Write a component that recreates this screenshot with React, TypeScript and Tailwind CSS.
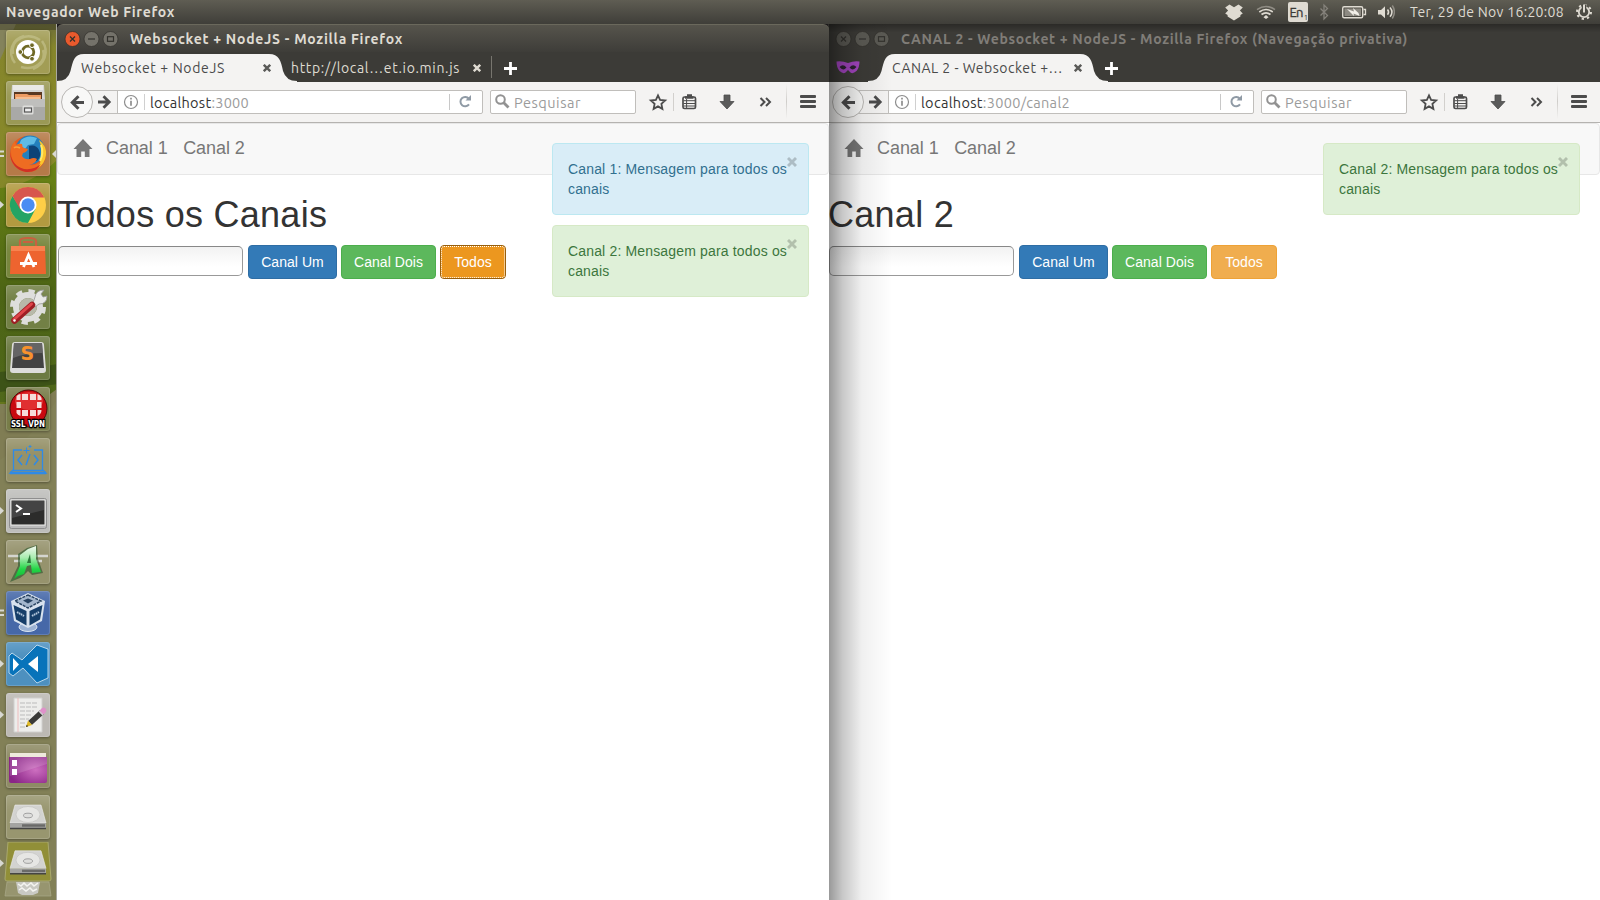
import React, { useLayoutEffect, useRef, useState } from "react";

/** Single-line label whose letter spacing is adjusted so it fills `width` px. */
function Label({ text, width, className = "" }: { text: React.ReactNode; width: number; className?: string }) {
  const ref = useRef<HTMLSpanElement>(null);
  const [spacing, setSpacing] = useState(0);
  useLayoutEffect(() => {
    const el = ref.current;
    if (!el) return;
    const natural = el.getBoundingClientRect().width;
    const n = el.textContent?.length ?? 1;
    setSpacing((width - natural) / n);
  }, [width]);
  return (
    <span
      ref={ref}
      className={"inline-block shrink-0 whitespace-nowrap font-['Ubuntu','Noto_Sans',sans-serif] " + className}
      style={{ letterSpacing: spacing + "px" }}
    >
      {text}
    </span>
  );
}

/* ---------- top panel ---------- */

function TopPanel() {
  return (
    <header className="flex h-6 shrink-0 items-center bg-linear-to-b from-[#5f5d53] to-[#3f3e39] pl-[6px] text-[#dfdbd2]">
      <Label text="Navegador Web Firefox" width={169} className="text-[14px] font-bold leading-6" />
      <svg className="ml-auto shrink-0" width="175" height="24" viewBox="1220 0 175 24" fill="none">
        <g fill="#dfdbd2">
          <path d="M1229.500 4.500l4.500 2.800 4.500-2.800 4.300 3-2.900 3 2.900 3-2.400 1.600v1.500l-6.400 4-6.400-4v-1.500l-2.400-1.600 2.900-3-2.900-3z" />
          <path d="M1263.500 18.300l2.500-2.200 2.500 2.200-2.500 1.700z" transform="translate(0 -1)" />
          <rect x="1288" y="2" width="20" height="20" rx="2" />
          <path d="M1378 10h3l4-3.800v12l-4-3.700h-3z" />
        </g>
        <path d="M1261.500 14.500q4.500-3.400 9 0M1259.300 12q6.700-5 13.400 0" stroke="#dfdbd2" strokeWidth="1.700" />
        <path d="M1257 9.700q9-6.500 18 0" stroke="#8f8c84" strokeWidth="1.600" />
        <text x="1289.500" y="17" fontSize="13" fill="#3b3a36" stroke="#3b3a36" strokeWidth=".3" fontFamily="Ubuntu, Noto Sans, sans-serif" textLength="14">En</text>
        <text x="1304" y="20" fontSize="7" fill="#3b3a36" fontFamily="Noto Sans, sans-serif">1</text>
        <path d="M1320.500 8.500l7 7-3.500 3.500V5l3.500 3.500-7 7" stroke="#85827b" strokeWidth="1.300" />
        <rect x="1342.700" y="6.700" width="20" height="11" rx="1.500" stroke="#dfdbd2" strokeWidth="1.400" />
        <path d="M1363.500 9.500h2v5h-2" stroke="#dfdbd2" strokeWidth="1.300" />
        <rect x="1344.500" y="8.500" width="16.500" height="7.500" fill="#8d8a82" />
        <path d="M1347 9l7 2.500-1-3.500 5.500 5 1 3-6-2.500.5 2.500z" fill="#f2efe8" />
        <path d="M1387.500 9.500q2.200 2.700 0 5.300M1390 7.500q4 4.700 0 9.300" stroke="#dfdbd2" strokeWidth="1.500" />
        <path d="M1392.300 5.500q4.200 6.500 0 13" stroke="#8f8c84" strokeWidth="1.500" />
      </svg>
      <Label text="Ter, 29 de Nov 16:20:08" width={154} className="ml-[15px] text-[14px] leading-6" />
      <svg className="ml-3 mr-2 shrink-0" width="16" height="18" viewBox="0 0 16 18" fill="none" stroke="#dfdbd2">
        <circle cx="8" cy="9" r="5.200" strokeWidth="1.800" />
        <circle cx="8" cy="9" r="7" strokeWidth="2" strokeDasharray="2.300 3.200" />
        <path d="M8 1.500v8" stroke="#4b4a43" strokeWidth="4.500" />
        <path d="M8 1.500v8" strokeWidth="2" />
      </svg>
    </header>
  );
}

/* ---------- launcher ---------- */

const Drive = () => (
  <g>
    <path d="M9 10h26l5 18H4z" fill="#d3d3d1" stroke="#eee" strokeWidth=".6" />
    <ellipse cx="22" cy="19.500" rx="12" ry="8" fill="#e6e6e4" stroke="#c4c4c2" strokeWidth=".7" />
    <ellipse cx="22" cy="20.500" rx="4.500" ry="2.300" fill="#dededc" stroke="#999" strokeWidth=".9" />
    <path d="M4 28h36v5H4z" fill="#a4a4a2" />
    <path d="M4 33.500h36" stroke="#454543" strokeWidth="1.500" />
    <path d="M16 30.500h23" stroke="#6a6a68" strokeWidth="2.500" />
  </g>
);

type Tile = { name: string; bg: string; icon: React.ReactNode; left?: 1 | 2; active?: boolean };

const tiles: Tile[] = [
  {
    name: "dash",
    bg: "bg-[#a29d55]",
    icon: (
      <g fill="none">
        <path d="M7 24C4 8 22 2 34 10M37 20c4 12-9 21-22 17M9 33C1 23 6 9 18 6M36 11c8 11 2 24-9 28" stroke="#d0cd9d" strokeWidth="2.500" opacity=".5" />
        <circle cx="22" cy="22" r="12" fill="#fff" />
        <circle cx="22" cy="22" r="5.800" stroke="#6f6925" strokeWidth="2.800" />
        <g fill="#6f6925" stroke="#fff" strokeWidth="1">
          <circle cx="14.300" cy="22" r="2.400" />
          <circle cx="26" cy="15.200" r="2.400" />
          <circle cx="26" cy="28.800" r="2.400" />
        </g>
      </g>
    ),
  },
  {
    name: "files",
    bg: "bg-[#9a9956]",
    icon: (
      <g>
        <path d="M6 4h32l1 15H5z" fill="#d7d7d5" />
        <path d="M7 4h30v5H7z" fill="#e9e9e7" />
        <path d="M8 11h28v8H8z" fill="#5b3922" />
        <path d="M9 13h12l2 1h12v6H9z" fill="#ee9b62" />
        <path d="M10 16h24v3H10z" fill="#f6bd90" />
        <path d="M5 18h34v21H5z" fill="#a9a9a7" />
        <path d="M5 18h34v8H5z" fill="#bfbfbd" />
        <rect x="16.500" y="24.500" width="11" height="9" rx="1.500" fill="#dededc" />
        <rect x="18.500" y="27" width="7" height="4" fill="#eee" stroke="#555" strokeWidth="1.200" />
      </g>
    ),
  },
  {
    name: "firefox",
    bg: "bg-[#b57a48]",
    left: 2,
    active: true,
    icon: (
      <g>
        <circle cx="22" cy="22" r="18" fill="#e55b20" />
        <circle cx="24" cy="18" r="14.500" fill="#2380bd" />
        <path d="M15 8q7-6 16-2l-3 6-6 1-3 4-6-4z" fill="#5fbbe6" />
        <path d="M23 14q7-2 10 4t-2 11l-8-2z" fill="#0d4377" />
        <path d="M33 8q8 6 7 15-1 9-9 14 4-6 4-13 1-9-2-16z" fill="#fbc62d" />
        <path d="M35 13q3 8-1 16" stroke="#ffe86b" strokeWidth="2" fill="none" />
        <path d="M5 16q1-4 4-7l1 4q3-2 6-1 0 3 2 4l4 1q-1 3-5 4l-1 3q3 4 8 3 4-2 7 0-2 5-8 6 8 1 12-4-4 10-14 9Q4 36 5 16z" fill="#ee6c22" />
        <path d="M4 20q2 14 14 17 11 1 17-5-5 9-15 8Q5 37 4 20z" fill="#cf3026" />
        <path d="M8 16q2-2 6 0" stroke="#f9a13a" strokeWidth="1.600" fill="none" />
      </g>
    ),
  },
  {
    name: "chrome",
    bg: "bg-[#b29a40]",
    left: 1,
    icon: (
      <g>
        <circle cx="22" cy="22" r="18" fill="#fdce47" />
        <path d="M6.400 13A18 18 0 0 0 22 40l7.500-14L22 22l-7 4z" fill="#25a464" />
        <path d="M6.400 13A18 18 0 0 1 37.600 13L38 14.500H22L14 26z" fill="#d7574d" />
        <circle cx="22" cy="22" r="8.500" fill="#fff" />
        <circle cx="22" cy="22" r="6.700" fill="#4a8df3" />
      </g>
    ),
  },
  {
    name: "software",
    bg: "bg-[#77863d]",
    icon: (
      <g>
        <path d="M14 13V7q0-3 8-3t8 3v6M17 8h10" stroke="#c9603f" strokeWidth="2.200" fill="none" />
        <path d="M5 12h34l1 28H4z" fill="#ee642f" />
        <path d="M5 12h34v5H5z" fill="#f7834f" />
        <path d="M17.500 33l5-12 5.500 12M14 29.500h17" stroke="#fff" strokeWidth="2.800" fill="none" />
      </g>
    ),
  },
  {
    name: "settings",
    bg: "bg-[#728045]",
    icon: (
      <g>
        <circle cx="22" cy="22" r="12" fill="none" stroke="#dededc" strokeWidth="6" />
        <circle cx="22" cy="22" r="16" fill="none" stroke="#dededc" strokeWidth="4" strokeDasharray="6.280 6.280" />
        <circle cx="22" cy="22" r="9" fill="#b8b9aa" />
        <path d="M27 18l2-6q1-7 9-7l-3 4 2 3 4-1q0 8-8 8l-4 3z" fill="#e8e8e6" stroke="#999" strokeWidth=".8" />
        <path d="M26 20L8.500 35.500" stroke="#9e1e24" strokeWidth="6.500" strokeLinecap="round" />
        <path d="M25.500 19L8 34.500" stroke="#e0454a" strokeWidth="3" strokeLinecap="round" />
        <circle cx="8.500" cy="35.500" r="1.200" fill="#fff" />
      </g>
    ),
  },
  {
    name: "sublime",
    bg: "bg-[#6c7a42]",
    icon: (
      <g>
        <path d="M6 9q0-3 3-3h26q3 0 3 3l2 25q0 3-3 3H7q-3 0-3-3z" fill="#dcdcda" />
        <path d="M8 7h28l2 25H6z" fill="#424242" />
        <path d="M8 7h28l.7 10Q20 17 7 22z" fill="#656565" />
        <text x="14.500" y="24" fontFamily="DejaVu Sans, sans-serif" fontWeight="bold" fontSize="19" fill="#f7922d">S</text>
      </g>
    ),
  },
  {
    name: "vpn",
    bg: "bg-[#777c48]",
    icon: (
      <g>
        <circle cx="22.500" cy="21.500" r="18.500" fill="#c9090f" stroke="#4d0908" />
        <ellipse cx="23" cy="14" rx="14" ry="9" fill="#f04a48" opacity=".6" />
        <path d="M16 7h6v6h-6zM24 7h6v6h-6zM10.500 9q2-2 4-2v6h-4zM31.500 7q3 1 4 4v2h-4zM10.500 15h4.500v6h-4.500zM31 15h4.500v6H31zM10.500 23h4v6q-3-1-4-3zM16 23h6v6h-6zM24 23h6v6h-6zM31.500 23h4q0 4-4 6z" fill="#f6dcda" />
        <text x="5" y="39.500" fontFamily="DejaVu Sans, sans-serif" fontWeight="bold" fontSize="9" textLength="34" lengthAdjust="spacingAndGlyphs" fill="#fff" stroke="#000" strokeWidth="2.500" paintOrder="stroke">SSL VPN</text>
      </g>
    ),
  },
  {
    name: "editor",
    bg: "bg-[#959168]",
    icon: (
      <g fill="none" stroke="#2f8ae6" strokeWidth="1.300">
        <path d="M16 12H7.500v20.500h29V12H28" />
        <path d="M7 32l-3 3h36l-3-3" />
        <path d="M20.500 9.500v6M17.500 12.500h6M24 7v3M22.500 8.500h3" strokeWidth="1" />
        <path d="M16 17l-4 5 4 5M28 17l4 5-4 5M24 16l-4 11" strokeWidth="1.500" />
        <path d="M4 35h36" strokeWidth="2.500" />
      </g>
    ),
  },
  {
    name: "terminal",
    bg: "bg-[#bebebb]",
    left: 1,
    icon: (
      <g>
        <rect x="3.500" y="9.500" width="37" height="30" rx="2" fill="#bababa" stroke="#8e8e8e" />
        <rect x="5" y="11" width="34" height="25" fill="#2c2c2b" stroke="#f0f0ee" />
        <path d="M6 12h32v9L6 29z" fill="#444" />
        <path d="M10 16l5 3.500-5 3.500M17 25h7" stroke="#fff" strokeWidth="2" fill="none" />
      </g>
    ),
  },
  {
    name: "monitor",
    bg: "bg-[#96936d]",
    icon: (
      <g>
        <defs>
          <linearGradient id="mon" x1="0" y1="0" x2="0" y2="1">
            <stop offset="0" stopColor="#f2f8f0" />
            <stop offset=".35" stopColor="#a9ecb0" />
            <stop offset=".7" stopColor="#22d646" />
            <stop offset="1" stopColor="#16b537" />
          </linearGradient>
        </defs>
        <path d="M2 16h40M8 21h28" stroke="#d5d5cf" strokeWidth="2.500" />
        <path d="M4 42l8-16V14l9-6 10-3 1 14 5 14-11 2-4-4-4 4-4 3z" fill="#1c4e23" opacity=".55" />
        <path d="M8 39l6-13V15l8-6 8-3v13l5 13-9 1-1-8-4 1-3 8-6 2z" fill="url(#mon)" />
        <path d="M21 23l3-9 1 9z" fill="#2c7a3a" />
      </g>
    ),
  },
  {
    name: "virtualbox",
    bg: "bg-[#4668a8]",
    left: 2,
    icon: (
      <g>
        <ellipse cx="22" cy="36" rx="9" ry="4.500" fill="#9cb3d4" stroke="#dbe5f2" />
        <path d="M22 2l17 8-3 20-14 7L8 30 5 10z" fill="#d8e2ee" />
        <path d="M22 4l13 6-13 7L9 10z" fill="#a4b7cd" stroke="#274260" strokeWidth="1.500" strokeDasharray="3 1" />
        <path d="M7.500 14L20.500 20v14.500L10 28.500zM36.500 14L23.500 20v14.500L34 28.500z" fill="#163e69" />
        <path d="M11 21l7 4M26 25l7-4" stroke="#b5c8dc" strokeWidth="2" strokeDasharray="1.600 .6" />
        <path d="M17 9.500l5-2 5 2-5 3z" fill="#274260" />
      </g>
    ),
  },
  {
    name: "vscode",
    bg: "bg-[#4d90bf]",
    left: 1,
    icon: (
      <g>
        <path d="M3 14l3-3 10 7L31 3l11 4v29l-11 5-14-15-10 8-4-3z" fill="#0873ba" stroke="#b9d8ec" strokeWidth="1" />
        <path d="M7 16v13l6-6.500zM32 14v16l-10-8z" fill="#fff" />
      </g>
    ),
  },
  {
    name: "gedit",
    bg: "bg-[#bcb9b4]",
    left: 1,
    icon: (
      <g>
        <path d="M8 5h28v34H8z" fill="#ededeb" stroke="#d0d0ce" />
        <path d="M12 5v34" stroke="#efaaaa" strokeWidth=".7" />
        <path d="M14 10h17M14 14h18M14 18h14M14 22h12M14 26h9M14 30h6M14 34h6" stroke="#bbb" strokeWidth="1" strokeDasharray="5 1" />
        <path d="M24 30L36 19" stroke="#393937" strokeWidth="5.500" />
        <path d="M36.500 18.500l1-1" stroke="#df91ca" strokeWidth="5.500" strokeLinecap="round" />
        <path d="M20 34l2-6.500 4 4.500z" fill="#dfb822" />
        <path d="M20 34l.7-2.200 1.500 1.500z" fill="#222" />
        <path d="M34.500 20.500l1-1" stroke="#ccc" strokeWidth="5.500" />
      </g>
    ),
  },
  {
    name: "workspace",
    bg: "bg-[#8e8b65]",
    icon: (
      <g>
        <defs>
          <radialGradient id="ws" cx=".7" cy=".5" r=".7">
            <stop offset="0" stopColor="#cd6fc0" />
            <stop offset="1" stopColor="#8a2587" />
          </radialGradient>
        </defs>
        <path d="M4 9h36v4H4z" fill="#eeeadd" />
        <path d="M3 13h38v24q0 2-2 2H5q-2 0-2-2z" fill="url(#ws)" />
        <path d="M4 13h37v7L4 32z" fill="#fff" opacity=".14" />
        <path d="M6 16h5v6H6zM6 25h5v6H6z" fill="#fff" />
      </g>
    ),
  },
  { name: "disk", bg: "bg-[#98966f]", icon: <Drive /> },
];

function Launcher() {
  return (
    <aside className="relative flex w-[57px] shrink-0 flex-col items-center overflow-hidden border-r border-[#aaa9a0] bg-[#807e55]">
      <svg className="absolute inset-0" width="57" height="876" viewBox="0 24 57 876" preserveAspectRatio="none">
        <defs>
          <linearGradient id="wall" x1="0" y1="0" x2="0" y2="1">
            <stop offset="0" stopColor="#6d6c3a" />
            <stop offset=".06" stopColor="#85852b" />
            <stop offset=".35" stopColor="#88892a" />
            <stop offset="1" stopColor="#65761c" />
          </linearGradient>
          <linearGradient id="leaf" x1="0" y1="0" x2="0" y2="1">
            <stop offset="0" stopColor="#6b8515" />
            <stop offset=".55" stopColor="#4c6414" />
            <stop offset="1" stopColor="#50681b" />
          </linearGradient>
        </defs>
        <path d="M0 24h57v380H0z" fill="url(#wall)" />
        <path d="M0 60l16-36H0z" fill="#84835c" />
        <path d="M0 188q30-2 57-28v242H0z" fill="url(#leaf)" />
        <path d="M0 372q30-3 57-8v20L0 392z" fill="#3d5317" />
        <path d="M0 414q30-4 57-25v511H0z" fill="#807d54" />
        <path d="M0 460q30-20 57-60v500H0z" fill="#828057" />
        <path d="M0 24h57v6H0z" fill="#2e2d1b" opacity=".4" />
      </svg>
      <div className="relative flex w-full flex-col gap-[7px] pl-[6px] pt-[6px]">
        {tiles.map((t) => (
          <div key={t.name} className="relative h-11 w-11">
            <div className={"flex h-11 w-11 items-center justify-center rounded-[3px] shadow-[0_1px_3px_rgba(0,0,0,.35),inset_0_0_0_1px_rgba(255,255,255,.14),inset_0_14px_14px_-8px_rgba(255,255,255,.18)] " + t.bg}>
              <svg className="overflow-visible" width="44" height="44" viewBox="0 0 44 44">{t.icon}</svg>
            </div>
            {t.left && (
              <svg className="absolute -left-[6px] top-[18px]" width="5" height="8" viewBox="0 0 5 8" fill="#d8d8d2">
                {t.left === 1 ? <path d="M0 0v7.500L4 3.700z" /> : <path d="M0 .5h4v2H0zM0 5h4v2H0z" />}
              </svg>
            )}
            {t.active && (
              <svg className="absolute left-[46px] top-[18px]" width="4" height="8" viewBox="0 0 4 8" fill="#d8d8d2">
                <path d="M4 0v8L0 4z" />
              </svg>
            )}
          </div>
        ))}
      </div>
      <svg className="relative mt-[3px] shrink-0" width="57" height="58" viewBox="0 842 57 58">
        <path d="M8 842h40l3 37q0 2-2 2H7q-2 0-2-2z" fill="#918f38" stroke="#a9a86e" />
        <g transform="translate(6 841) scale(1 .98)"><Drive /></g>
        <path d="M7 882h42l2 14H5z" fill="#97956f" stroke="#aaa98a" strokeWidth=".7" />
        <path d="M16 882h24l-2 11-5 2H22l-4-2z" fill="#c9c9c3" />
        <path d="M18 884l3 2 3-3 3 3 4-3 3 3 4-3M19 890l3-2 4 3 4-3 3 3 4-2" stroke="#f4f4f0" strokeWidth="1.500" fill="none" />
        <path d="M0 859.500v7.500l4-3.700z" fill="#d8d8d2" />
      </svg>
    </aside>
  );
}

/* ---------- browser window ---------- */

function WindowButtons({ active }: { active: boolean }) {
  const ink = active ? "#32312c" : "#33322e";
  const dim = active ? "#74726a" : "#5b5a54";
  return (
    <svg className="shrink-0" width="55" height="18" viewBox="0 0 55 18" fill="none">
      <circle cx="8.500" cy="9" r="7.500" fill={active ? "#ea5a2d" : dim} stroke="#302f2b" strokeWidth=".7" />
      <circle cx="27.500" cy="9" r="7.500" fill={dim} stroke="#302f2b" strokeWidth=".7" />
      <circle cx="46.500" cy="9" r="7.500" fill={dim} stroke="#302f2b" strokeWidth=".7" />
      <path d="M6 6.500l5 5M11 6.500l-5 5" stroke={ink} strokeWidth="1.200" />
      <path d="M24 9h7" stroke={ink} strokeWidth="1.200" />
      <rect x="43.500" y="6.700" width="6" height="4.600" stroke={ink} strokeWidth="1.200" />
    </svg>
  );
}

const TabClose = ({ className }: { className: string }) => (
  <svg className={"shrink-0 " + className} width="8" height="8" viewBox="0 0 8 8" stroke="currentColor" strokeWidth="2.400">
    <path d="M.8.8l6.400 6.400M7.200.8L.8 7.200" />
  </svg>
);

const NewTab = ({ className }: { className: string }) => (
  <svg className={"shrink-0 " + className} width="13" height="13" viewBox="0 0 13 13" stroke="#fff" strokeWidth="2.800">
    <path d="M6.500 0v13M0 6.500h13" />
  </svg>
);

function ActiveTab({ title, width }: { title: string; width: number }) {
  return (
    <div className="relative flex h-[30px] w-[240px] shrink-0 items-center pl-[24px] pr-[26px] pt-[2px] text-[#4a4a4a]">
      <svg className="absolute left-0 top-0" width="240" height="30" viewBox="0 0 240 30">
        <path d="M0 30V29Q11 29 13.500 19C16 9 17 2 27 2H212C222 2 224 9 226 19Q229 29 240 29V30z" fill="#f4f3f2" />
      </svg>
      <Label text={title} width={width} className="relative text-[14px] leading-[28px]" />
      <TabClose className="relative ml-auto text-[#5a5a58]" />
    </div>
  );
}

const MaskIcon = () => (
  <svg className="ml-[8px] mr-[5px] shrink-0" width="24" height="15" viewBox="0 0 24 15">
    <path d="M.5 1.500q5.500-1 11.500 1.500 6-2.500 11.500-1.500 0 6-3 9.500-4.500 4-7 .5L12 10l-1.500 1.500q-2.500 3.500-7-.5-3-3.500-3-9.500z" fill="#a546c2" />
    <path d="M3.500 7q3.500-3.500 7 .5-3.500 4-7-.5zM13.500 7.500q3.500-4 7-.5-3.500 4.500-7 .5z" fill="#2d2332" />
  </svg>
);

function NavToolbar({ path }: { path: string }) {
  return (
    <div className="relative flex h-[40.500px] shrink-0 items-center border-b border-[#b5b3b0] bg-[#f4f3f2]">
      <div className="ml-[30px] flex h-6 w-[396px] items-center border border-[#c0bebb] bg-white rounded-r-[2px]">
        <div className="flex h-full w-[30px] items-center border-r border-[#c0bebb] bg-[#f4f3f2] pl-[10px]">
          <svg width="14" height="14" viewBox="0 0 14 14" fill="none" stroke="#4c4c4c" strokeWidth="2.800">
            <path d="M0 7h11M5.500 1.300L11.200 7l-5.700 5.700" />
          </svg>
        </div>
        <svg className="ml-[5px]" width="16" height="16" viewBox="0 0 16 16" fill="none" stroke="#8d8d8d" strokeWidth="1.200">
          <circle cx="8" cy="8" r="6.500" />
          <path d="M8 3.800v1.800M8 6.700v5" strokeWidth="1.700" />
        </svg>
        <div className="ml-[5px] h-4 w-px bg-[#d0d0d0]" />
        <Label
          text={<>localhost<span className="text-[#9b9b9b]">{path}</span></>}
          width={path.length > 5 ? 149 : 99}
          className="ml-[5px] pt-[2px] text-[14.5px] leading-5 text-[#333]"
        />
        <div className="ml-auto h-4 w-px bg-[#c8c8c8]" />
        <svg className="ml-[9px] mr-[10px]" width="13" height="13" viewBox="0 0 13 13" fill="none" stroke="#8f9aa5" strokeWidth="2">
          <path d="M10 9.300A4.700 4.700 0 1 1 9.800 3.600" />
          <path d="M12 0v5.500H6.500z" fill="#8f9aa5" stroke="none" />
        </svg>
      </div>
      <div className="absolute left-1 top-1 flex h-8 w-8 items-center justify-center rounded-full border border-[#b9b7b4] bg-[#f8f8f7]">
        <svg width="15" height="15" viewBox="0 0 15 15" fill="none" stroke="#4c4c4c" strokeWidth="3">
          <path d="M14 7.500H3M8.500 1.300L2.300 7.500l6.200 6.200" />
        </svg>
      </div>
      <div className="ml-[7px] flex h-6 w-[146px] items-center rounded-[2px] border border-[#c0bebb] bg-white pl-1">
        <svg width="15" height="15" viewBox="0 0 15 15" fill="none" stroke="#929292">
          <circle cx="5.500" cy="5.500" r="4.300" strokeWidth="2" />
          <path d="M8.500 8.500l5 5" strokeWidth="2.800" />
        </svg>
        <Label text="Pesquisar" width={67} className="ml-[4px] pt-[2px] text-[14.500px] leading-5 text-[#9b9b9b]" />
      </div>
      <svg className="shrink-0" width="136" height="40" viewBox="636 82 136 40" fill="none" stroke="#4c4c4c">
        <path d="M658 95.300l2.100 4.600 5.100.6-3.800 3.400 1 5-4.400-2.500-4.400 2.500 1-5-3.800-3.400 5.100-.6z" strokeWidth="1.800" />
        <path d="M673.500 93v18" stroke="#d2d0cd" />
        <rect x="683" y="97" width="12.500" height="11.500" rx="1.500" strokeWidth="1.700" />
        <path d="M685 97.500h8.500M687 95.500h5" strokeWidth="2.500" />
        <path d="M683.500 100.700h12M683.500 103.500h12M683.500 106h12M686.600 99v9" strokeWidth="1" />
        <path d="M724 95h6v6.500h4l-7 7.500-7-7.500h4z" fill="#5b5b5b" strokeWidth=".8" />
        <path d="M760.500 98l4 4-4 4M766 98l4 4-4 4" strokeWidth="2" />
      </svg>
      <div className="ml-[14px] h-[35px] w-px bg-linear-to-b from-transparent via-[#cfcdca] to-transparent" />
      <div className="ml-[13px] flex w-4 flex-col gap-[2px]">
        <div className="h-[3px] rounded-[1px] bg-[#4c4c4c]" />
        <div className="h-[3px] rounded-[1px] bg-[#4c4c4c]" />
        <div className="h-[3px] rounded-[1px] bg-[#4c4c4c]" />
      </div>
    </div>
  );
}

/* ---------- page ---------- */

function Alert({ channel }: { channel: 1 | 2 }) {
  const tone =
    channel === 1 ? "border-[#bce8f1] bg-[#d9edf7] text-[#31708f]" : "border-[#d6e9c6] bg-[#dff0d8] text-[#3c763d]";
  return (
    <div className={"relative h-[72px] w-[257px] rounded-[4px] border p-[15px] text-[14px] leading-5 tracking-[0.16px] " + tone}>
      <p className="whitespace-nowrap">
        Canal {channel}: Mensagem para todos os
        <br />
        canais
      </p>
      <svg className="absolute right-[11px] top-[13px]" width="10" height="10" viewBox="0 0 9 9" stroke="#000" strokeOpacity=".2" strokeWidth="2.600" fill="none">
        <path d="M.9.9l7.200 7.200M8.100.9L.9 8.100" />
      </svg>
    </div>
  );
}

const btn = "h-[34px] shrink-0 rounded-[4px] border px-0 pt-px text-[14px] tracking-[0.05px] text-white ";

function Page({ title, alerts, focused }: { title: string; alerts: (1 | 2)[]; focused: boolean }) {
  return (
    <main className="relative flex-1 bg-white font-['Liberation_Sans',Arial,sans-serif]">
      <nav className="flex h-[52px] items-center rounded-[4px] border border-[#e7e7e7] bg-[#f8f8f8] pb-px pl-[15px] text-[18px] tracking-[-0.06px] text-[#777]">
        <svg width="20" height="18" viewBox="0 0 20 18" fill="#777">
          <path d="M10 0L.5 10h3v8h4.700v-5.500h3.600V18h4.700v-8h3z" />
        </svg>
        <a className="ml-[13px] leading-5">Canal 1</a>
        <a className="ml-[15.500px] leading-5">Canal 2</a>
      </nav>
      <h1 className="mt-[20px] text-[36px] leading-[40px] tracking-[0.270px] text-[#333] font-normal">{title}</h1>
      <div className="mt-[10px] flex items-center">
        <input className="ml-px mr-[5px] h-[30px] w-[185px] shrink-0 -translate-y-px rounded-[5px] border border-[#999] border-t-[#888] bg-linear-to-b from-[#f2f2f2] to-white to-70% outline-none" />
        <button className={btn + "mr-1 w-[89px] border-[#2e6da4] bg-[#337ab7]"}>Canal Um</button>
        <button className={btn + "mr-1 w-[95px] border-[#4cae4c] bg-[#5cb85c]"}>Canal Dois</button>
        <button
          className={
            btn +
            (focused
              ? "w-[66px] border-[#985f0d] bg-[#ec971f] outline-1 -outline-offset-2 outline-dotted outline-white"
              : "w-[66px] border-[#eea236] bg-[#f0ad4e]")
          }
        >
          Todos
        </button>
      </div>
      <div className="absolute right-5 top-5 flex flex-col gap-[10px]">
        {alerts.map((c) => (
          <Alert key={c} channel={c} />
        ))}
      </div>
    </main>
  );
}

export default function App() {
  return (
    <div className="flex h-[900px] w-[1600px] flex-col overflow-hidden bg-[#1d1a1c]">
      <TopPanel />
      <div className="flex min-h-0 flex-1">
        <Launcher />
        <section className="relative z-10 flex w-[772px] shrink-0 flex-col">
          <div className="flex h-7 shrink-0 items-center rounded-t-[6px] border-t border-[#6a685c] bg-linear-to-b from-[#56544c] to-[#3e3d39] pl-[7px]">
            <WindowButtons active />
            <Label text="Websocket + NodeJS - Mozilla Firefox" width={273} className="ml-[11px] pt-px text-[14px] font-bold leading-6 text-[#dfdbd2]" />
          </div>
          <div className="flex h-[30px] shrink-0 items-center bg-[#3c3b37]">
            <ActiveTab title="Websocket + NodeJS" width={144} />
            <Label text="http://local…et.io.min.js" width={169} className="-ml-[6px] pt-[2px] text-[14px] leading-[28px] text-[#dfdbd2]" />
            <TabClose className="ml-[13px] mt-[2px] text-[#dfdbd2]" />
            <div className="ml-[10px] h-[22px] w-px bg-[#77756e]" />
            <NewTab className="ml-[12px] mt-[2px]" />
          </div>
          <NavToolbar path=":3000" />
          <Page title="Todos os Canais" alerts={[1, 2]} focused />
        </section>
        <section className="relative -ml-px flex w-[772px] shrink-0 flex-col">
          <div className="flex h-7 shrink-0 items-center bg-linear-to-b from-[#2b2a27] via-[#3c3b37] via-30% to-[#3c3b37] pl-[7px] pt-px">
            <WindowButtons active={false} />
            <Label text="CANAL 2 - Websocket + NodeJS - Mozilla Firefox (Navegação privativa)" width={507} className="ml-[11px] pt-px text-[14px] font-bold leading-6 text-[#807d78]" />
          </div>
          <div className="flex h-[30px] shrink-0 items-center bg-[#3c3b37]">
            <MaskIcon />
            <div className="w-[3px]" />
            <ActiveTab title="CANAL 2 - Websocket +…" width={171} />
            <NewTab className="-ml-[3px] mt-[2px]" />
          </div>
          <NavToolbar path=":3000/canal2" />
          <Page title="Canal 2" alerts={[2]} focused={false} />
          <div className="pointer-events-none absolute inset-y-0 left-px w-[33px] bg-linear-to-r from-black/40 via-black/22 via-40% to-black/6" />
          <div className="pointer-events-none absolute inset-y-0 left-[34px] w-[30px] bg-linear-to-r from-black/6 to-transparent" />
        </section>
      </div>
    </div>
  );
}
